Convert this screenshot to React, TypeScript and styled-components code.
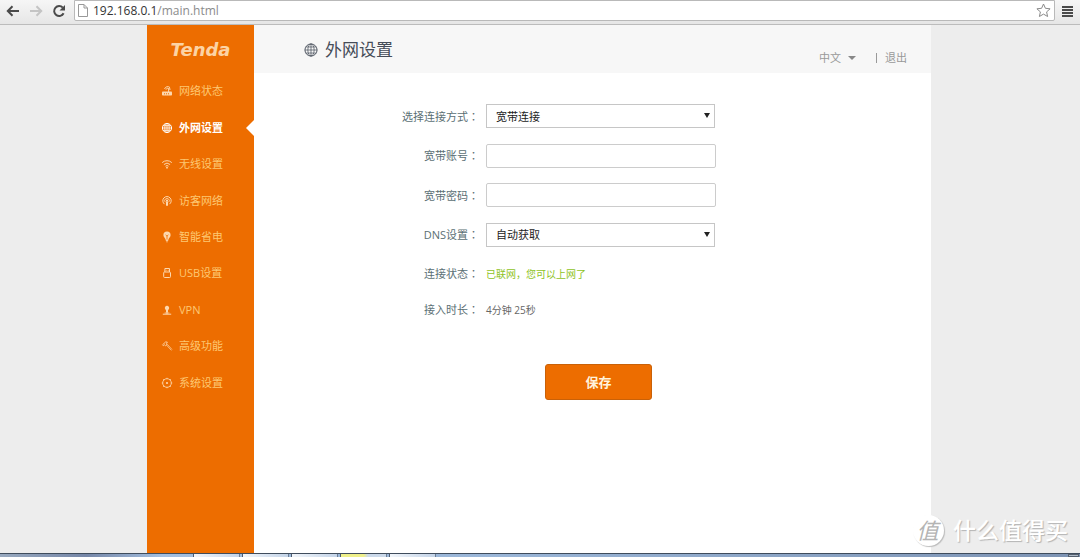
import React, { useState } from "react";
import styled, { createGlobalStyle } from "styled-components";

const orange = "#ed6d00";
const sans = `"Open Sans", "Noto Sans CJK SC", sans-serif`;

const GlobalStyle = createGlobalStyle`
  * { box-sizing: border-box; }
  body {
    margin: 0;
    background: #ededed;
    font-family: ${sans};
    font-size: 11px;
    line-height: 16px;
    color: #5b6f74;
  }
  button, input, select { font-family: inherit; }
`;

const Screen = styled.div`
  position: relative;
  display: flex;
  flex-direction: column;
  min-height: 100vh;
`;

/* ---------- browser toolbar ---------- */

const Toolbar = styled.header`
  display: flex;
  align-items: flex-start;
  height: 25px;
  padding: 0 5px;
  background: linear-gradient(#f6f6f6, #e6e6e6);
  border-bottom: 1px solid #bcbcbc;
`;

const ToolButton = styled.button<{ $muted?: boolean }>`
  display: flex;
  justify-content: center;
  align-items: center;
  width: 16px;
  height: 22px;
  margin-right: 7px;
  padding: 0;
  border: 0;
  background: none;
  color: ${(p) => (p.$muted ? "#c4c4c4" : "#4a4a4a")};
  &:last-child { margin: 0 0 0 4px; }
`;

const AddressBar = styled.div`
  flex: 1;
  display: flex;
  align-items: center;
  gap: 5px;
  height: 21px;
  padding: 0 3px;
  background: #fff;
  border: 1px solid #b9b9b9;
  border-radius: 0 0 2px 2px;
`;

const Address = styled.div`
  flex: 1;
  font-size: 12px;
  color: #8c8c8c;
  outline: none;
`;

const Host = styled.span`
  color: #333;
`;

const StarButton = styled.button`
  display: flex;
  padding: 0;
  border: 0;
  background: none;
  color: #8a8a8a;
`;

/* ---------- router page ---------- */

const Stage = styled.div`
  flex: 1;
  display: flex;
  justify-content: center;
  padding-right: 2px;
`;

const Page = styled.div`
  flex: 0 1 784px;
  display: flex;
  background: #fff;
`;

const Sidebar = styled.aside`
  flex: 0 0 107px;
  background: ${orange};
`;

const Logo = styled.a`
  display: block;
  height: 48px;
  font: italic bold 18px/50px "DejaVu Sans", sans-serif;
  text-align: center;
  text-decoration: none;
  color: #fcd3a4;
`;

const Menu = styled.nav`
  display: grid;
  grid-template-rows: repeat(9, 1fr);
  height: 328px;
`;

const MenuLink = styled.a<{ $active?: boolean }>`
  position: relative;
  display: flex;
  align-items: center;
  gap: 6px;
  padding-left: 14px;
  text-decoration: none;
  font-weight: ${(p) => (p.$active ? 700 : 400)};
  color: ${(p) => (p.$active ? "#fff" : "#fdc873")};
  svg { color: ${(p) => (p.$active ? "#fff" : "#fdd8ae")}; }
`;

const Pointer = styled.span`
  position: absolute;
  right: 0;
  border: 8px solid transparent;
  border-left: 0;
  border-right-color: #fff;
`;

const Main = styled.main`
  flex: 1;
  min-width: 0;
`;

const TitleBar = styled.div`
  display: flex;
  justify-content: space-between;
  align-items: center;
  height: 48px;
  padding: 2px 24px 0 50px;
  background: #f7f7f7;
`;

const Title = styled.h1`
  display: flex;
  align-items: center;
  gap: 7px;
  margin: 0;
  font-size: 17px;
  font-weight: 400;
  line-height: 24px;
  color: #464d59;
`;

const Tools = styled.div`
  display: flex;
  align-items: center;
  padding-top: 16px;
  color: #999;
`;

const LanguageButton = styled.button`
  display: flex;
  align-items: center;
  gap: 7px;
  padding: 0;
  border: 0;
  background: none;
  font-size: 11px;
  line-height: 16px;
  color: #999;
`;

const Caret = styled.span`
  border: 4px solid transparent;
  border-top-color: #888;
  border-bottom: 0;
`;

const Divider = styled.span`
  width: 1px;
  height: 10px;
  margin: 0 8px 0 20px;
  background: #999;
`;

const Logout = styled.a`
  color: #999;
  text-decoration: none;
`;

const Form = styled.form`
  display: flex;
  flex-direction: column;
  padding: 31px 24px 24px 0;
`;

const Fields = styled.div`
  display: flex;
  flex-direction: column;
  justify-content: space-between;
  height: 143px;
`;

const Row = styled.div`
  display: grid;
  grid-template-columns: 225px minmax(0, 230px);
  column-gap: 7px;
  align-items: center;
`;

const Statuses = styled.div`
  display: flex;
  flex-direction: column;
  gap: 19px;
  padding-top: 18px;
`;

const Label = styled.label`
  text-align: right;
  color: #5b6f74;
`;

const Colon = styled.span`
  font-family: "Noto Sans CJK TC", sans-serif;
`;

const Picker = styled.div`
  position: relative;
  margin-right: 1px;
  &::after {
    content: "";
    position: absolute;
    top: 9px;
    right: 5px;
    border: 3px solid transparent;
    border-top: 5px solid #222;
    border-bottom: 0;
    pointer-events: none;
  }
`;

const Select = styled.select`
  display: block;
  appearance: none;
  width: 100%;
  height: 24px;
  padding: 0 20px 0 9px;
  border: 1px solid #c6c6c6;
  border-radius: 0;
  background: #fff;
  font-size: 11px;
  color: #222;
`;

const TextInput = styled.input`
  width: 100%;
  height: 24px;
  padding: 0 9px;
  border: 1px solid #ccc;
  border-radius: 2px;
  background: #fff;
  font-size: 11px;
`;

const Value = styled.output<{ $good?: boolean }>`
  font-size: 10px;
  color: ${(p) => (p.$good ? "#8fc31f" : "#666")};
`;

const SaveButton = styled.button`
  width: 107px;
  height: 36px;
  margin: 46px 0 0 291px;
  padding: 0 0 2px;
  border: 1px solid #c96108;
  border-radius: 3px;
  background: ${orange};
  font-size: 13px;
  font-weight: 700;
  color: #fff3dc;
`;

/* ---------- overlay and taskbar ---------- */

const Watermark = styled.div`
  position: absolute;
  right: 12px;
  bottom: 10px;
  display: flex;
  align-items: center;
  gap: 9px;
  font-size: 23px;
  font-weight: 500;
  line-height: 34px;
  color: #fff;
  text-shadow: 1px 1px 1px #b4b4b4;
`;

const Seal = styled.span`
  width: 31px;
  height: 31px;
  border-radius: 50%;
  background: #fff;
  box-shadow: 1px 1px 1px #bbb;
  font-size: 22px;
  font-style: italic;
  font-weight: 400;
  line-height: 30px;
  text-align: center;
  text-indent: -2px;
  text-shadow: none;
  color: #b4b4b4;
`;

const Taskbar = styled.footer`
  display: flex;
  gap: 2px;
  height: 4px;
  padding: 0 1px 0 193px;
  border-top: 1px solid #3f4c5c;
  background: linear-gradient(90deg, #98a9bf, #7687a8 8%, #a3bfe0 15%, #9ab6d8 45%, #7d93b3);
`;

const Task = styled.span<{ $tint?: string }>`
  width: 47px;
  border-right: 1px solid #6d7f96;
  border-left: 1px solid #4f5d70;
  background: ${(p) => p.$tint ?? "linear-gradient(90deg, #f1f5fa, #c4d4e8)"};
`;

const ShowDesktop = styled.span`
  width: 11px;
  margin-left: auto;
  border: 1px solid #55606e;
  background: #aeb9c6;
`;

/* ---------- icons ---------- */

const Icon = ({ size = 12, children }: { size?: number; children: React.ReactNode }) => (
  <svg width={size} height={size} viewBox="0 0 12 12" fill="none" stroke="currentColor" strokeWidth="1" aria-hidden="true">
    {children}
  </svg>
);

const globe = (
  <>
    <circle cx="6" cy="6" r="4.6" />
    <ellipse cx="6" cy="6" rx="2.2" ry="4.6" strokeWidth="0.8" />
    <path d="M1.4 6h9.2M2.2 3.7h7.6M2.2 8.3h7.6M6 1.4v9.2" strokeWidth="0.8" />
  </>
);

const titleGlobe = (
  <g strokeWidth="0.6">
    <circle cx="6" cy="6" r="5.2" strokeWidth="0.8" />
    <ellipse cx="6" cy="6" rx="2.7" ry="5.2" />
    <path d="M.8 6h10.4M1.6 3.4h8.8M1.6 8.6h8.8M6 .8v10.4" />
  </g>
);

const menu = [
  {
    name: "网络状态",
    icon: (
      <>
        <path d="M3.6 4a3.2 3.2 0 0 1 5.4-1.4M5 4.600a1.800 1.800 0 0 1 3-.8M7.600 4v3" />
        <rect x="1" y="6.600" width="10" height="4" rx="0.800" fill="currentColor" stroke="none" />
        <path d="M3 8.800h1M5 8.800h1M7 8.800h1" stroke={orange} />
        <path d="M8.600 2.600 9 5" />
      </>
    ),
  },
  { name: "外网设置", icon: globe },
  {
    name: "无线设置",
    icon: (
      <>
        <path d="M1.2 4.6a7 7 0 0 1 9.6 0M2.9 6.5a4.6 4.6 0 0 1 6.2 0M4.5 8.2a2.3 2.3 0 0 1 3 0" />
        <circle cx="6" cy="9.7" r="0.9" fill="currentColor" stroke="none" />
      </>
    ),
  },
  {
    name: "访客网络",
    icon: (
      <>
        <path d="M3.6 9.2a4.200 4.200 0 1 1 4.800 0" />
        <path d="M4.300 7.200a2.300 2.300 0 1 1 3.400 0" strokeWidth="0.800" />
        <circle cx="6" cy="5.600" r="1.100" fill="currentColor" stroke="none" />
        <path d="M6 6.600v4.200" strokeWidth="2" />
      </>
    ),
  },
  {
    name: "智能省电",
    icon: (
      <>
        <path d="M6 .6a3.600 3.600 0 0 0-3.600 3.600C2.400 6 4.300 6.800 4.500 8.700h3C7.700 6.800 9.600 6 9.600 4.200A3.600 3.600 0 0 0 6 .6z" fill="currentColor" stroke="none" />
        <path d="M6 8V5M4.700 3.700 6 5.200l1.300-1.500" stroke={orange} strokeWidth="0.8" />
        <path d="M4.800 9.500h2.400M5.300 10.800h1.400" strokeWidth="0.9" />
      </>
    ),
  },
  {
    name: "USB设置",
    icon: (
      <>
        <path d="M3.900 5V1.500h4.600V5" />
        <rect x="2.700" y="5" width="6.800" height="5.500" rx="0.800" />
        <path d="M5.200 2.800v1M7.200 2.800v1" strokeWidth="0.800" />
      </>
    ),
  },
  {
    name: "VPN",
    icon: (
      <>
        <path d="M6 1.800a2.200 2.200 0 0 0-1.900 3.300L5 6.200v2h2v-2l.9-1.100A2.200 2.200 0 0 0 6 1.800z" fill="currentColor" stroke="none" />
        <path d="M6 7.800v2.400M1.800 10.200h8.400" />
        <path d="M3.600 9h4.800" strokeWidth="0.8" />
      </>
    ),
  },
  {
    name: "高级功能",
    icon: (
      <>
        <path d="M1.500 4.800 4.700 1.900l1.700.3-1 1.100.7.900-1.600 1.500-1-.9-1.100.9z" strokeWidth="0.9" />
        <path d="m5.400 5 5 5.400M6.300 4.300l4.700 5.200" strokeWidth="0.7" />
      </>
    ),
  },
  {
    name: "系统设置",
    icon: (
      <>
        <circle cx="6" cy="6" r="4.300" strokeWidth="0.900" />
        <circle cx="6" cy="6" r="1.100" fill="currentColor" stroke="none" />
        <path d="M6 .8v1M6 10.200v1M.8 6h1M10.200 6h1M2.300 2.300l.7.7M9 9l.7.7M9.700 2.300 9 3M3 9l-.7.7" />
      </>
    ),
  },
];

const FieldLabel = ({ htmlFor, children }: { htmlFor: string; children: string }) => (
  <Label htmlFor={htmlFor}>
    {children}
    <Colon>：</Colon>
  </Label>
);

export default function App() {
  const [active, setActive] = useState("外网设置");

  return (
    <Screen>
      <GlobalStyle />
      <Toolbar>
        <ToolButton aria-label="后退">
          <svg width="14" height="12" viewBox="0 0 14 12" fill="none" stroke="currentColor" strokeWidth="2">
            <path d="M13 6H2.500M6.500 1.300 1.800 6l4.700 4.700" />
          </svg>
        </ToolButton>
        <ToolButton aria-label="前进" $muted>
          <svg width="14" height="12" viewBox="0 0 14 12" fill="none" stroke="currentColor" strokeWidth="2">
            <path d="M1 6h10.500M7.500 1.300 12.200 6l-4.700 4.700" />
          </svg>
        </ToolButton>
        <ToolButton aria-label="刷新">
          <svg width="14" height="14" viewBox="0 0 14 14" fill="none" stroke="currentColor" strokeWidth="2">
            <path d="M11.600 9.300A5 5 0 1 1 10.800 3.600" />
            <path d="M13 1v5.500H7.500z" fill="currentColor" stroke="none" />
          </svg>
        </ToolButton>
        <AddressBar>
          <svg width="10" height="13" viewBox="0 0 10 13" fill="#fff" stroke="#999" aria-hidden="true">
            <path d="M.5.5h5.500l3.500 3.500v8.500h-9zM6 .5V4h3.500" />
          </svg>
          <Address role="textbox" aria-label="地址" tabIndex={0}>
            <Host>192.168.0.1</Host>/main.html
          </Address>
          <StarButton aria-label="收藏">
            <svg width="15" height="15" viewBox="0 0 15 15" fill="none" stroke="currentColor" strokeLinejoin="round">
              <path d="m7.500 1 1.900 4.300 4.700.5-3.500 3.100 1 4.600-4.100-2.400-4.100 2.400 1-4.600L.9 5.800l4.700-.5z" />
            </svg>
          </StarButton>
        </AddressBar>
        <ToolButton aria-label="菜单">
          <svg width="11" height="11" viewBox="0 0 11 11" stroke="currentColor">
            <path d="M0 1h11M0 4h11M0 7h11M0 10h11" strokeWidth="2" />
          </svg>
        </ToolButton>
      </Toolbar>

      <Stage>
        <Page>
          <Sidebar>
            <Logo href="#home">Tenda</Logo>
            <Menu>
              {menu.map((item) => (
                <MenuLink
                  key={item.name}
                  href={`#${item.name}`}
                  $active={item.name === active}
                  onClick={() => setActive(item.name)}
                >
                  <Icon>{item.icon}</Icon>
                  {item.name}
                  {item.name === active && <Pointer />}
                </MenuLink>
              ))}
            </Menu>
          </Sidebar>

          <Main>
            <TitleBar>
              <Title>
                <Icon size={14}>{titleGlobe}</Icon>
                外网设置
              </Title>
              <Tools>
                <LanguageButton>
                  中文
                  <Caret />
                </LanguageButton>
                <Divider />
                <Logout href="#logout">退出</Logout>
              </Tools>
            </TitleBar>

            <Form onSubmit={(e) => e.preventDefault()}>
              <Fields>
                <Row>
                  <FieldLabel htmlFor="mode">选择连接方式</FieldLabel>
                  <Picker>
                    <Select id="mode">
                      <option>宽带连接</option>
                    </Select>
                  </Picker>
                </Row>
                <Row>
                  <FieldLabel htmlFor="account">宽带账号</FieldLabel>
                  <TextInput id="account" type="text" />
                </Row>
                <Row>
                  <FieldLabel htmlFor="password">宽带密码</FieldLabel>
                  <TextInput id="password" type="password" />
                </Row>
                <Row>
                  <FieldLabel htmlFor="dns">DNS设置</FieldLabel>
                  <Picker>
                    <Select id="dns">
                      <option>自动获取</option>
                    </Select>
                  </Picker>
                </Row>
              </Fields>
              <Statuses>
                <Row>
                  <FieldLabel htmlFor="status">连接状态</FieldLabel>
                  <Value id="status" $good>已联网，您可以上网了</Value>
                </Row>
                <Row>
                  <FieldLabel htmlFor="uptime">接入时长</FieldLabel>
                  <Value id="uptime">4分钟 25秒</Value>
                </Row>
              </Statuses>
              <SaveButton type="submit">保存</SaveButton>
            </Form>
          </Main>
        </Page>
      </Stage>

      <Taskbar>
        <Task />
        <Task />
        <Task />
        <Task $tint="linear-gradient(90deg, #eff08a 50%, #cbd9ea 60%)" />
        <Task />
        <ShowDesktop />
      </Taskbar>

      <Watermark>
        <Seal>值</Seal>
        什么值得买
      </Watermark>
    </Screen>
  );
}
